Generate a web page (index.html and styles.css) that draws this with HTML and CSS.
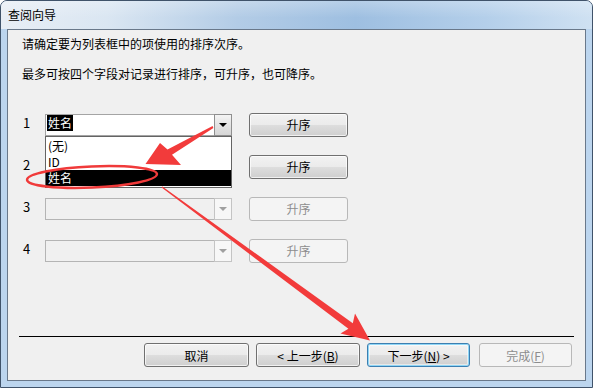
FILE: index.html
```html
<!DOCTYPE html>
<html lang="zh-CN">
<head>
  <meta charset="UTF-8">
  <meta name="viewport" content="width=device-width, initial-scale=1.0">
  <title>查阅向导</title>
  <link rel="stylesheet" href="styles.css">
</head>
<body>
  <div class="window">
    <div class="titlebar">查阅向导</div>

    <div class="client">
      <p class="intro">请确定要为列表框中的项使用的排序次序。</p>
      <p class="intro intro--second">最多可按四个字段对记录进行排序，可升序，也可降序。</p>

      <div class="sort-grid">
        <span class="sort-grid__num">1</span>
        <div class="combo combo--open">
          <span class="combo__value"><span class="combo__sel">姓名</span></span>
          <span class="combo__btn"><i class="combo__arrow"></i></span>
          <ul class="combo__list">
            <li>(无)</li>
            <li>ID</li>
            <li class="active">姓名</li>
          </ul>
        </div>
        <button class="btn btn--small">升序</button>

        <span class="sort-grid__num">2</span>
        <div class="combo">
          <span class="combo__value"></span>
          <span class="combo__btn"><i class="combo__arrow"></i></span>
        </div>
        <button class="btn btn--small">升序</button>

        <span class="sort-grid__num">3</span>
        <div class="combo combo--disabled">
          <span class="combo__value"></span>
          <span class="combo__btn"><i class="combo__arrow"></i></span>
        </div>
        <button class="btn btn--small" disabled>升序</button>

        <span class="sort-grid__num">4</span>
        <div class="combo combo--disabled">
          <span class="combo__value"></span>
          <span class="combo__btn"><i class="combo__arrow"></i></span>
        </div>
        <button class="btn btn--small" disabled>升序</button>
      </div>

      <div class="footer">
        <div class="footer__sep"></div>
        <div class="footer__buttons">
          <button class="btn btn--cancel">取消</button>
          <button class="btn btn--back">&lt; 上一步(<u>B</u>)</button>
          <button class="btn btn--next btn--default">下一步(<u>N</u>) &gt;</button>
          <button class="btn btn--finish" disabled>完成(<u>F</u>)</button>
        </div>
      </div>
    </div>
  </div>

  <!-- red annotations drawn on top of the screenshot -->
  <svg class="marks" viewBox="0 0 593 388" width="593" height="388">
    <polygon points="213.4,128 212.6,126 167.5,149.6 160,143 145.5,164 181,165 172,154.8" />
    <ellipse cx="92" cy="177" rx="65" ry="10.5" transform="rotate(-2.5 92 177)" class="ring" />
    <polygon points="162.4,186.4 161.6,187.6 348.4,328.8 340.5,333.5 370,340.5 355,313.5 352.8,323.2" />
  </svg>
</body>
</html>
```

FILE: styles.css
```css
* {
  box-sizing: border-box;
  margin: 0;
  padding: 0;
}

body {
  width: 593px;
  height: 388px;
  overflow: hidden;
  position: relative;
  font-family: "Noto Sans CJK SC", "Microsoft YaHei", sans-serif;
  font-size: 12px;
  color: #000;
  background: #fff;
}

.window {
  width: 593px;
  height: 388px;
  display: flex;
  flex-direction: column;
  border: 1px solid #40536a;
  border-radius: 7px 7px 0 0;
  background: #bcd5ee;
  overflow: hidden;
}

.titlebar {
  height: 28px;
  flex: none;
  display: flex;
  align-items: center;
  padding-left: 7px;
  font-size: 12px;
  line-height: 16px;
  background:
    linear-gradient(to bottom, rgba(255,255,255,0.25), rgba(255,255,255,0) 60%),
    linear-gradient(to right, #e8eef5 0%, #dae6f2 18%, #b3cce6 40%, #9ebfe1 60%, #b4cfea 82%, #cfe1f2 100%);
}

.client {
  flex: 1;
  display: flex;
  flex-direction: column;
  margin: 0 6px 6px 6px;
  border: 1px solid #69788a;
  background: #f0f0f0;
  padding-top: 6px;
}

.intro {
  line-height: 16px;
  padding-left: 14px;
}

.intro--second {
  margin-top: 14px;
}

/* four sort rows */
.sort-grid {
  display: grid;
  grid-template-columns: 22px 204px 99px;
  grid-auto-rows: 25px;
  row-gap: 17px;
  margin: 30px 0 0 15px;
  align-items: center;
}

.sort-grid__num {
  font-size: 13px;
  line-height: 16px;
  padding-bottom: 4px;
}

.combo {
  position: relative;
  width: 187px;
  height: 22px;
  display: flex;
  border: 1px solid #a4a4a4;
  background: #fff;
}

.combo__value {
  flex: 1;
  padding: 0 0 0 1px;
  line-height: 16px;
}

.combo__sel {
  display: inline-block;
  background: #000;
  color: #fff;
  padding: 0 1px;
  line-height: 16px;
}

.combo__btn {
  width: 18px;
  margin: -1px -1px -1px 0;
  display: flex;
  align-items: center;
  justify-content: center;
  border: 1px solid #8f8f8f;
  background: linear-gradient(#f4f4f4, #e3e3e3 50%, #d6d6d6);
}

.combo__arrow {
  width: 0;
  height: 0;
  border-left: 4px solid transparent;
  border-right: 4px solid transparent;
  border-top: 4px solid #000;
}

.combo__list {
  position: absolute;
  top: 21px;
  left: -1px;
  width: 187px;
  height: 52px;
  list-style: none;
  background: #fff;
  border: 1px solid #646464;
  padding-top: 1px;
  z-index: 2;
}

.combo__list li {
  height: 16px;
  line-height: 16px;
  padding-left: 2px;
}

.combo__list li.active {
  background: #000;
  color: #fff;
}

.combo--disabled {
  background: #f0f0f0;
  border-color: #b4b4b4;
}

.combo--disabled .combo__btn {
  border-color: #c4c4c4;
  background: #f7f7f7;
}

.combo--disabled .combo__arrow {
  border-top-color: #a0a0a0;
}

/* win7 push buttons */
.btn {
  height: 24px;
  font-family: inherit;
  font-size: 12px;
  color: #000;
  border: 1px solid #707070;
  border-radius: 3px;
  background: linear-gradient(#f2f2f2 0%, #ebebeb 48%, #dddddd 52%, #cfcfcf 100%);
  box-shadow: inset 0 0 0 1px rgba(255,255,255,0.7);
}

.btn u {
  text-decoration: underline;
}

.btn--small {
  width: 99px;
}

.btn:disabled {
  color: #8d8d8d;
  border-color: #b8b8b8;
  background: #f4f4f4;
  box-shadow: none;
}

.btn--default {
  border-color: #3c7fb1;
  box-shadow: inset 0 0 0 1px #8fd6f6, inset 0 0 0 2px rgba(255,255,255,0.5);
}

.footer {
  margin-top: auto;
  padding-bottom: 13px;
}

.footer__sep {
  height: 1px;
  margin: 0 11px;
  background: #000;
}

.footer__buttons {
  display: flex;
  justify-content: flex-end;
  margin-top: 6px;
  padding-right: 13px;
}

.btn--cancel {
  width: 105px;
}

.btn--back {
  width: 104px;
  margin-left: 7px;
}

.btn--next {
  width: 103px;
  margin-left: 7px;
}

.btn--finish {
  width: 93px;
  margin-left: 9px;
}

.marks {
  position: absolute;
  top: 0;
  left: 0;
  z-index: 10;
  pointer-events: none;
}

.marks polygon {
  fill: #f23b3b;
}

.marks .ring {
  fill: none;
  stroke: #f03a3a;
  stroke-width: 2.5;
}
```
